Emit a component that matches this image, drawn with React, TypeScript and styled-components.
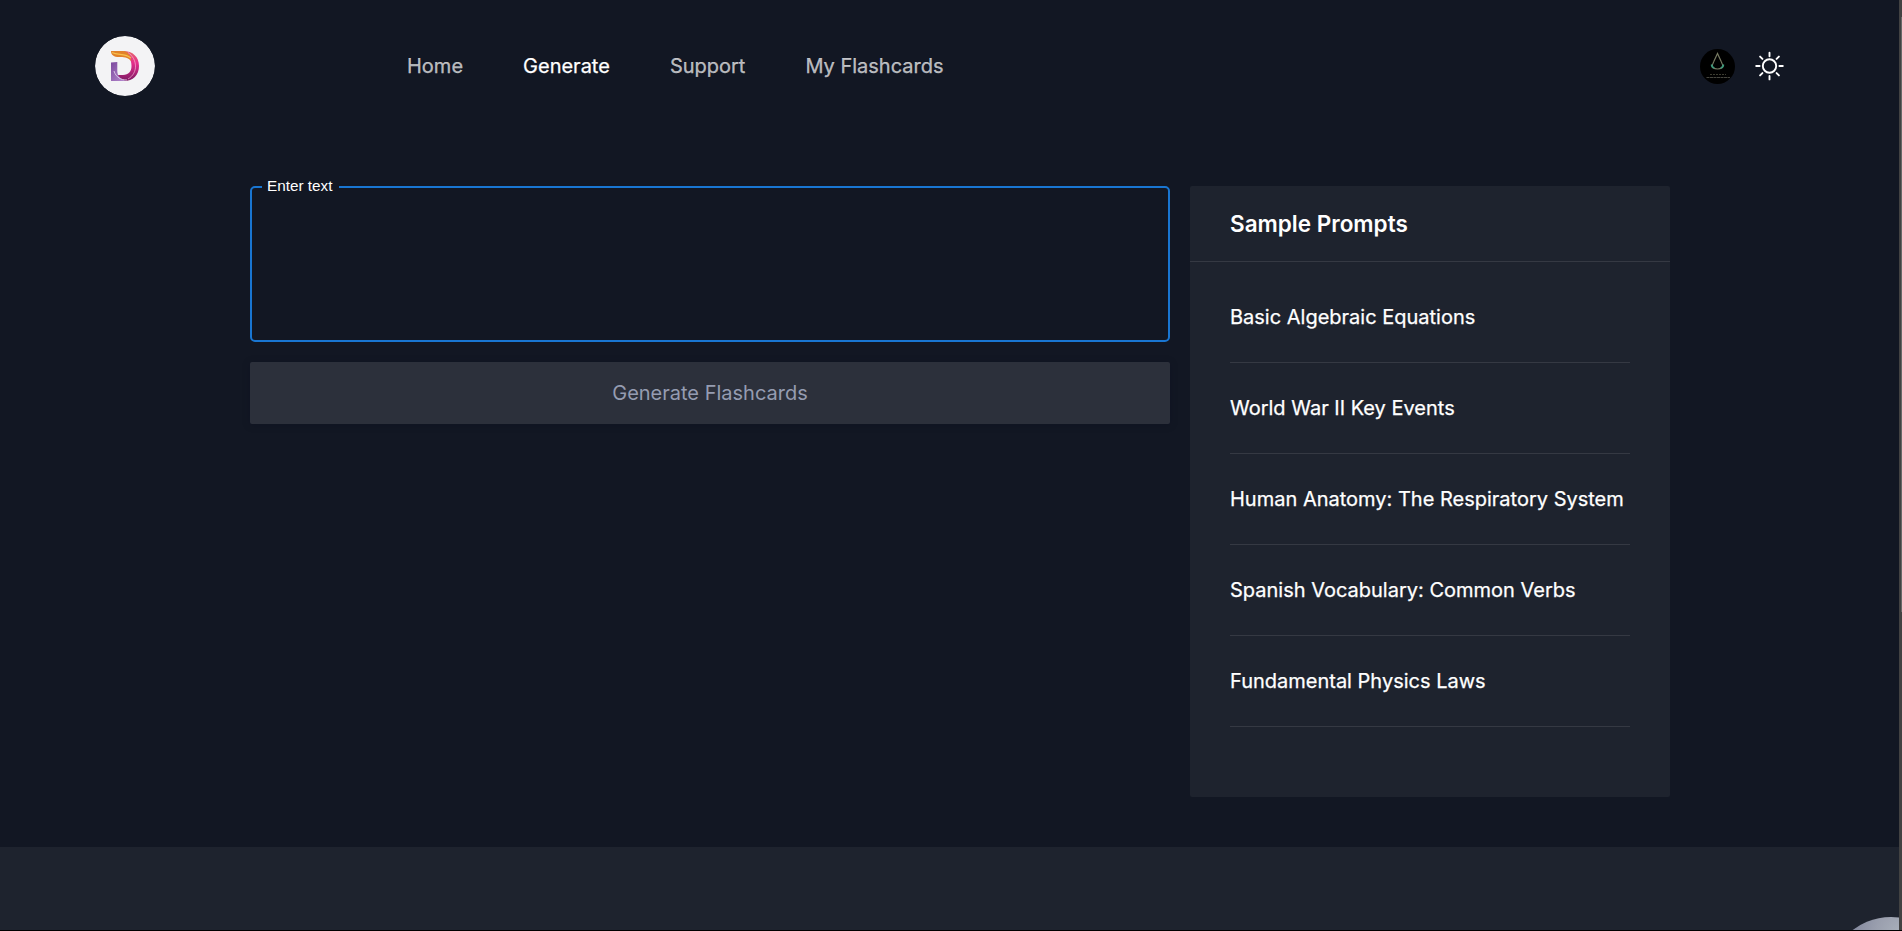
import React from "react";
import styled, { createGlobalStyle } from "styled-components";

const GlobalStyle = createGlobalStyle`
  *, *::before, *::after { box-sizing: border-box; }
  html, body { margin: 0; height: 100%; overflow: hidden; background: #121723; }
  body { font-family: Inter, "Liberation Sans", sans-serif; }
  a { color: inherit; text-decoration: none; }
`;

const Screen = styled.div`
  display: grid;
  grid-template-columns: 1fr 3px;
  grid-template-rows: 930px 1px;
  height: 931px;
  background: #000;
`;

const Page = styled.div`
  display: flex;
  flex-direction: column;
  overflow: hidden;
  position: relative;
  background: #121723;
`;

const ScrollTrack = styled.div`
  background: #424242;
  padding: 17px 0 0 2px;
`;

const ScrollThumb = styled.div`
  height: 595px;
  background: #686868;
`;

const Header = styled.header`
  display: flex;
  align-items: center;
  height: 132px;
  padding: 0 114px 0 95px;
`;

const Logo = styled.a`
  display: block;
  width: 60px;
  height: 60px;
  margin-right: 252px;
  border-radius: 50%;
  overflow: hidden;
  svg { display: block; }
`;

const Nav = styled.nav`
  display: flex;
  gap: 60px;
  flex: 1;
`;

const NavLink = styled.a<{ $active?: boolean }>`
  font-size: 20px;
  line-height: 28px;
  color: ${(p) => (p.$active ? "#fff" : "rgba(255, 255, 255, 0.7)")};
  -webkit-text-stroke: 0.25px currentColor;
`;

const Actions = styled.div`
  display: flex;
  align-items: center;
  gap: 20px;
  svg { display: block; }
`;

const Main = styled.main`
  display: grid;
  grid-template-columns: 920px 480px;
  gap: 20px;
  align-items: start;
  padding: 54px 0 50px 250px;
`;

const Form = styled.form`
  display: flex;
  flex-direction: column;
  gap: 20px;
`;

const Field = styled.fieldset`
  height: 163px;
  margin: -7px 0 0;
  padding: 0 10px;
  border: 2px solid #1976d2;
  border-radius: 5px;
`;

const Legend = styled.legend`
  padding: 0 7px 0 5px;
  height: 16px;
  font-family: "Liberation Sans", Arial, sans-serif;
  font-size: 15.300px;
  line-height: 14px;
  color: #fff;
`;

const TextArea = styled.textarea`
  display: block;
  width: 100%;
  height: 130px;
  border: 0;
  outline: 0;
  resize: none;
  background: transparent;
  color: #fff;
  font: inherit;
`;

const SubmitButton = styled.button`
  height: 62px;
  border: 0;
  border-radius: 2px;
  background: #2c303b;
  color: #959cb1;
  font-family: inherit;
  font-size: 20px;
  box-shadow: 0 1px 8px rgba(4, 10, 34, 0.2);
`;

const Panel = styled.aside`
  height: 611px;
  border-radius: 2px;
  background: #1e232e;
`;

const PanelTitle = styled.h3`
  margin: 0;
  height: 76px;
  padding: 0 40px;
  border-bottom: 1px solid #353943;
  font-size: 22.500px;
  font-weight: 600;
  line-height: 76px;
  color: #fff;
`;

const PromptList = styled.ul`
  margin: 0;
  padding: 10px 40px 0;
  list-style: none;
`;

const Prompt = styled.li`
  height: 91px;
  border-bottom: 1px solid #353943;
  font-size: 20px;
  line-height: 90px;
  white-space: nowrap;
  color: #fff;
  -webkit-text-stroke: 0.25px currentColor;
`;

const Footer = styled.footer`
  flex: 1;
  background: #1e232e;
`;

const FloatingBubble = styled.div`
  position: absolute;
  top: 917px;
  left: 1828px;
  width: 126px;
  height: 126px;
  border-radius: 50%;
  background: radial-gradient(circle at 74px 18px, #abb2bc 0, #9a9fae 26px, #858a9f 50px);
`;

const LogoMark = () => (
  <svg width="60" height="60" viewBox="0 0 60 60">
    <defs>
      <linearGradient id="bowl" x1="0" y1="0" x2="0" y2="1">
        <stop offset="0" stopColor="#e66a6a" />
        <stop offset="0.4" stopColor="#e52e8c" />
        <stop offset="1" stopColor="#7d1a64" />
      </linearGradient>
      <linearGradient id="stem" x1="0" y1="0" x2="1" y2="1">
        <stop offset="0" stopColor="#7c4a9e" />
        <stop offset="1" stopColor="#b78bd0" />
      </linearGradient>
    </defs>
    <circle cx="30" cy="30" r="30" fill="#f3f3f5" />
    <path d="M28 15C38 15 44 21 44 30C44 39 38 45 29 45H21L22 39H28C33.500 39 36.500 35.500 36.500 30C36.500 24 34 20 28 15Z" fill="url(#bowl)" />
    <path d="M16 26.500L22.300 26V35C22.300 40 26 43.500 31 45H16Z" fill="url(#stem)" />
    <path d="M16 15H28C33 15.500 35.500 19 36 25C33 21 28 21 24 21C19 21 16 19 16 15Z" fill="#e2822a" />
    <path d="M17 16.500C23 19.500 30 17 36 22" fill="none" stroke="#f6c04d" strokeWidth="1.200" />
    <path d="M33 16.500C42.500 23 43.500 37 33 43" fill="none" stroke="#f7b3d3" strokeWidth="0.7" />
    <path d="M19 35C21 41.500 26 44 32 44" fill="none" stroke="#ead9f2" strokeWidth="0.8" />
  </svg>
);

const Avatar = () => (
  <svg width="35" height="35" viewBox="0 0 35 35">
    <circle cx="17.500" cy="17.500" r="17.500" fill="#000" />
    <path d="M17.500 4.500L13.800 12.500Q11.800 16 12.500 18.500Q17.500 21.500 22.500 18.500Q23.200 16 21.200 12.500Z" fill="none" stroke="#777a62" strokeWidth="1.200" />
    <path d="M11.800 15.500Q11.300 18 14.300 19" fill="none" stroke="#3e9a7c" strokeWidth="1.800" />
    <path d="M23.200 15.500Q23.700 18 20.700 19" fill="none" stroke="#3e9a7c" strokeWidth="1.800" />
    <path d="M10 25.500H26" stroke="#3c3c30" strokeWidth="1" strokeDasharray="2 1" />
    <path d="M6.500 28.500H30" stroke="#4e4e46" strokeWidth="0.900" strokeDasharray="3 0.500" />
  </svg>
);

const SunIcon = () => (
  <svg width="30" height="30" viewBox="0 0 30 30" fill="none" stroke="#fff" strokeWidth="1.900" strokeLinecap="round">
    <circle cx="14.500" cy="15" r="6.700" />
    <path d="M14.500 1.700V5.200M14.500 25V28.400M1.200 15H4.600M24.400 15H27.800M5.100 5.600L7.400 7.900M21.600 22.100L23.900 24.400M5.100 24.400L7.400 22.100M21.600 7.900L23.900 5.600" />
  </svg>
);

const links = ["Home", "Generate", "Support", "My Flashcards"];
const prompts = [
  "Basic Algebraic Equations",
  "World War II Key Events",
  "Human Anatomy: The Respiratory System",
  "Spanish Vocabulary: Common Verbs",
  "Fundamental Physics Laws",
];

export default function App() {
  return (
    <>
      <GlobalStyle />
      <Screen>
        <Page>
          <Header>
            <Logo href="#"><LogoMark /></Logo>
            <Nav>
              {links.map((l) => (
                <NavLink key={l} href="#" $active={l === "Generate"}>{l}</NavLink>
              ))}
            </Nav>
            <Actions>
              <Avatar />
              <SunIcon />
            </Actions>
          </Header>
          <Main>
            <Form>
              <Field>
                <Legend>Enter text</Legend>
                <TextArea aria-label="Enter text" />
              </Field>
              <SubmitButton type="button">Generate Flashcards</SubmitButton>
            </Form>
            <Panel>
              <PanelTitle>Sample Prompts</PanelTitle>
              <PromptList>
                {prompts.map((p) => <Prompt key={p}>{p}</Prompt>)}
              </PromptList>
            </Panel>
          </Main>
          <Footer />
          <FloatingBubble />
        </Page>
        <ScrollTrack><ScrollThumb /></ScrollTrack>
      </Screen>
    </>
  );
}
